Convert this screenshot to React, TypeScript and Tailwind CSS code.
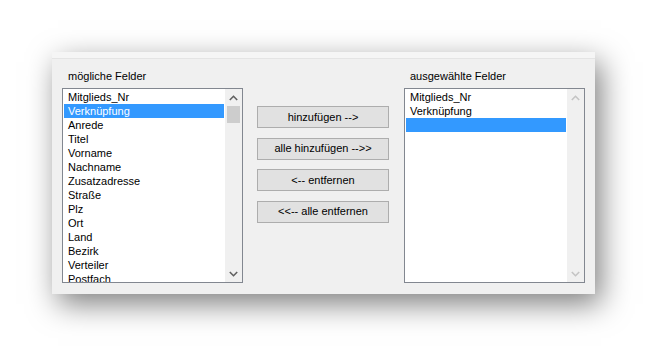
import React from "react";

const available = [
  "Mitglieds_Nr",
  "Verknüpfung",
  "Anrede",
  "Titel",
  "Vorname",
  "Nachname",
  "Zusatzadresse",
  "Straße",
  "Plz",
  "Ort",
  "Land",
  "Bezirk",
  "Verteiler",
  "Postfach",
];

const chosen = ["Mitglieds_Nr", "Verknüpfung", ""];

function Chevron({ up, disabled }: { up?: boolean; disabled?: boolean }) {
  return (
    <svg width="9" height="6" viewBox="0 0 9 6" className={up ? "" : "rotate-180"}>
      <polyline
        points="0.8,5 4.5,1.3 8.2,5"
        fill="none"
        stroke={disabled ? "#c4c4c4" : "#606060"}
        strokeWidth="1.6"
      />
    </svg>
  );
}

function ScrollBar({ disabled }: { disabled?: boolean }) {
  return (
    <div className="flex w-[17px] flex-col bg-[#f0f0f0]">
      <div className="flex h-[17px] items-center justify-center">
        <Chevron up disabled={disabled} />
      </div>
      <div className="flex-1">
        {!disabled && <div className="mx-[2px] h-[17px] bg-[#cdcdcd]" />}
      </div>
      <div className="flex h-[17px] items-center justify-center">
        <Chevron disabled={disabled} />
      </div>
    </div>
  );
}

function ListBox({ items, selected, disabled }: { items: string[]; selected: number; disabled?: boolean }) {
  return (
    <div className="flex h-[195px] w-[181px] border border-[#828790] bg-white">
      <div className="flex-1 overflow-hidden px-[1px] pt-[1px]">
        {items.map((item, i) => (
          <div
            key={i}
            className={
              i === selected
                ? "h-[14px] bg-[#3399ff] pl-[4px] text-[11px] leading-[14px] text-white"
                : "h-[14px] pl-[4px] text-[11px] leading-[14px] text-black"
            }
          >
            {item}
          </div>
        ))}
      </div>
      <ScrollBar disabled={disabled} />
    </div>
  );
}

function Button({ label }: { label: string }) {
  return (
    <button
      type="button"
      className="flex h-[22px] w-[132px] items-center justify-center border border-[#adadad] bg-[#e1e1e1] text-[11px] text-black"
    >
      {label}
    </button>
  );
}

export default function App() {
  return (
    <div className="h-[346px] w-[647px] overflow-hidden bg-white pl-[52px] pt-[52px] font-['Liberation_Sans',Arial,sans-serif]">
      <div className="flex h-[242px] w-[543px] flex-col bg-[#f0f0f0] shadow-[6px_10px_28px_rgba(0,0,0,0.5)]">
        <div className="h-[7px] border-b border-[#e4e4e4] bg-[#f5f5f5]" />
        <div className="flex items-start pt-[11px]">
          <div className="ml-[10px] flex flex-col">
            <div className="h-[13px] pl-[6px] text-[11px] leading-[13px] text-black">mögliche Felder</div>
            <div className="mt-[5px]">
              <ListBox items={available} selected={1} />
            </div>
          </div>

          <div className="ml-[14px] mt-[36px] flex flex-col gap-[9.5px]">
            <Button label="hinzufügen -->" />
            <Button label="alle hinzufügen -->>" />
            <Button label="<-- entfernen" />
            <Button label="<<-- alle entfernen" />
          </div>

          <div className="ml-[15px] flex flex-col">
            <div className="h-[13px] pl-[6px] text-[11px] leading-[13px] text-black">ausgewählte Felder</div>
            <div className="mt-[5px]">
              <ListBox items={chosen} selected={2} disabled />
            </div>
          </div>
        </div>
      </div>
    </div>
  );
}
